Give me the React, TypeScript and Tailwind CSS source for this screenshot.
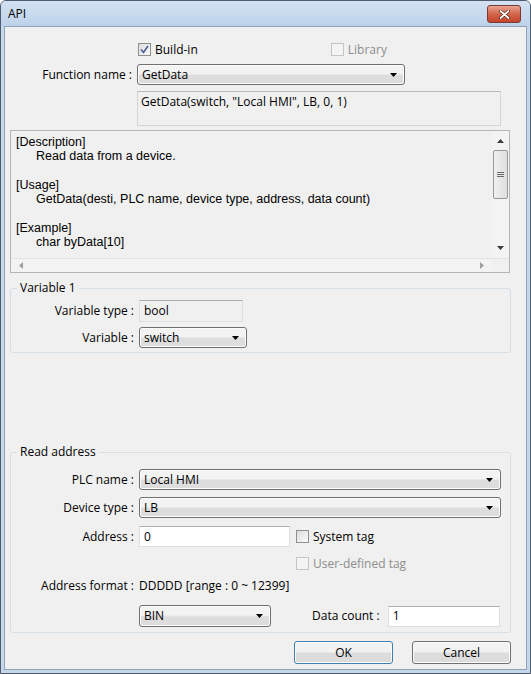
import React from 'react'

const font = "font-['Open_Sans','Noto_Sans',sans-serif]"

function Arrow({ color = '#000' }: { color?: string }) {
  return (
    <svg width="7" height="4" viewBox="0 0 7 4">
      <path d="M0 0h7L3.5 4z" fill={color} />
    </svg>
  )
}

function Combo({ value, className = '' }: { value: string; className?: string }) {
  return (
    <div
      className={`flex h-[21px] items-center justify-between rounded-[3px] border border-[#707070] bg-linear-to-b from-[#f3f3f3] from-45% to-[#dddddd] to-55% pl-[4px] pr-[7px] shadow-[inset_0_0_0_1px_#fcfcfc] ${className}`}
    >
      <span className="leading-none">{value}</span>
      <Arrow />
    </div>
  )
}

function Field({ value, className = '', readOnly = false }: { value: string; className?: string; readOnly?: boolean }) {
  return (
    <div
      className={`flex h-[21px] items-center border border-[#dbdfe6] border-t-[#abadb3] pl-[4px] ${readOnly ? 'bg-[#f0f0f0]' : 'bg-white'} ${className}`}
    >
      <span className="leading-none">{value}</span>
    </div>
  )
}

function Check({ label, checked = false, disabled = false }: { label: string; checked?: boolean; disabled?: boolean }) {
  return (
    <div className={`flex items-center gap-[4px] ${disabled ? 'text-[#8d8d8d]' : ''}`}>
      <div
        className={`flex h-[13px] w-[13px] items-center justify-center border ${
          disabled ? 'border-[#c5c5c5] bg-[#f4f4f4]' : 'border-[#8e8f8f] bg-linear-to-br from-[#dcdcdc] to-[#fbfbfb]'
        }`}
      >
        {checked && (
          <svg width="9" height="9" viewBox="0 0 9 9">
            <path d="M1 4.5l2.5 3L8 1" stroke="#4a5f97" strokeWidth="1.6" fill="none" />
          </svg>
        )}
      </div>
      <span className="leading-none">{label}</span>
    </div>
  )
}

function Row({ label, children, labelW, className = '' }: { label: string; children: React.ReactNode; labelW: string; className?: string }) {
  return (
    <div className={`flex items-center ${className}`}>
      <span className={`${labelW} shrink-0 pr-[5px] text-right leading-none`}>{label}</span>
      {children}
    </div>
  )
}

function Group({ title, className = '', children }: { title: string; className?: string; children: React.ReactNode }) {
  return (
    <fieldset className={`rounded-[3px] border border-[#d5dfe5] ${className}`}>
      <legend className="ml-[6px] px-[3px] leading-[14px]">{title}</legend>
      {children}
    </fieldset>
  )
}

// read-only help text, scrollbars drawn by hand
function Description() {
  return (
    <div className="flex h-[143px] w-[500px] flex-col border border-[#b5b5b5] bg-[#f0f0f0]">
      <div className="flex min-h-0 flex-1">
        <div className="flex-1 overflow-hidden pl-[5px] pt-[4px] font-['Liberation_Sans',Arial,sans-serif] text-[12.5px] leading-[14.3px]">
          <div>[Description]</div>
          <div className="pl-[20px]">Read data from a device.</div>
          <div>&nbsp;</div>
          <div>[Usage]</div>
          <div className="pl-[20px]">GetData(desti, PLC name, device type, address, data count)</div>
          <div>&nbsp;</div>
          <div>[Example]</div>
          <div className="pl-[20px]">char byData[10]</div>
        </div>
        <div className="flex w-[17px] flex-col items-center bg-[#f3f3f3] pt-[8px] pb-[8px]">
          <svg width="7" height="4" viewBox="0 0 7 4">
            <path d="M0 4h7L3.5 0z" fill="#3c3c3c" />
          </svg>
          <div className="mt-[7px] flex h-[49px] w-[15px] items-center justify-center rounded-[2px] border border-[#979797] bg-linear-to-r from-[#f0f0f0] to-[#dedede]">
            <svg width="7" height="6" viewBox="0 0 7 6">
              <path d="M0 0.5h7M0 2.5h7M0 4.5h7" stroke="#6b6b6b" strokeWidth="1" />
            </svg>
          </div>
          <div className="flex-1" />
          <Arrow color="#3c3c3c" />
        </div>
      </div>
      <div className="flex h-[14px] border-t border-[#e2e2e2]">
        <div className="flex flex-1 items-center justify-between bg-[#f3f3f3] px-[8px]">
          <svg width="4" height="7" viewBox="0 0 4 7">
            <path d="M4 0v7L0 3.5z" fill="#a0a0a0" />
          </svg>
          <svg width="4" height="7" viewBox="0 0 4 7">
            <path d="M0 0v7L4 3.5z" fill="#a0a0a0" />
          </svg>
        </div>
        <div className="w-[17px] bg-[#f0f0f0]" />
      </div>
    </div>
  )
}

function Button({ label, primary = false }: { label: string; primary?: boolean }) {
  return (
    <div
      className={`flex h-[23px] w-[99px] items-center justify-center rounded-[3px] border bg-linear-to-b from-[#f2f2f2] from-45% to-[#dcdcdc] to-55% shadow-[inset_0_0_0_1px_#fbfbfb] ${
        primary ? 'border-[#3c7fb1]' : 'border-[#707070]'
      }`}
    >
      {label}
    </div>
  )
}

export default function App() {
  return (
    <div className={`${font} flex h-[674px] w-[531px] flex-col overflow-hidden rounded-t-[6px] border border-[#4e5c6d] bg-[#c6d8ec] text-[12px] text-black`}>
      <div className="flex h-[25px] shrink-0 items-center justify-between bg-linear-to-b from-[#d3e2f2] to-[#bdd2ea] pl-[7px] pr-[9px]">
        <span className="text-[12px]">API</span>
        <div className="mt-[1px] flex h-[18px] w-[34px] items-center justify-center rounded-[3px] border border-[#7b3a30] bg-linear-to-b from-[#e8a593] via-[#d3654d] to-[#c4432c]">
          <svg width="11" height="9" viewBox="0 0 11 9">
            <path d="M1.5 1l8 7M9.5 1l-8 7" stroke="#4a1f18" strokeWidth="3" strokeLinecap="round" />
            <path d="M1.5 1l8 7M9.5 1l-8 7" stroke="#fff" strokeWidth="1.7" strokeLinecap="round" />
          </svg>
        </div>
      </div>

      <div className="mx-[3px] mb-[3px] flex flex-1 flex-col border border-[#8da2b8] bg-[#f0f0f0]">
        <div className="ml-[5px] flex w-[502px] flex-col pt-[16px]">
          <div className="flex items-center">
            <div className="ml-[128px]">
              <Check label="Build-in" checked />
            </div>
            <div className="ml-[133px]">
              <Check label="Library" disabled />
            </div>
          </div>

          <Row label="Function name :" labelW="w-[127px]" className="mt-[8px]">
            <Combo value="GetData" className="w-[268px]" />
          </Row>

          <div className="ml-[127px] mt-[6px] h-[35px] w-[364px] border border-[#d5d5d5] border-t-[#b8b8b8] px-[3px] pt-[4px] leading-none">
            GetData(switch, "Local HMI", LB, 0, 1)
          </div>

          <div className="mt-[4px]">
            <Description />
          </div>

          <Group title="Variable 1" className="mt-[8px] h-[72px] w-[501px]">
            <div className="flex flex-col pt-[5px]">
              <Row label="Variable type :" labelW="w-[128px]">
                <Field value="bool" readOnly className="h-[22px] w-[104px]" />
              </Row>
              <Row label="Variable :" labelW="w-[128px]" className="mt-[5px]">
                <Combo value="switch" className="w-[108px]" />
              </Row>
            </div>
          </Group>

          <Group title="Read address" className="mt-[92px] h-[188px] w-[501px]">
            <div className="flex flex-col pt-[10px]">
              <Row label="PLC name :" labelW="w-[128px]">
                <Combo value="Local HMI" className="w-[362px]" />
              </Row>
              <Row label="Device type :" labelW="w-[128px]" className="mt-[7px]">
                <Combo value="LB" className="w-[362px]" />
              </Row>
              <Row label="Address :" labelW="w-[128px]" className="mt-[8px]">
                <Field value="0" className="w-[151px]" />
                <div className="ml-[6px]">
                  <Check label="System tag" />
                </div>
              </Row>
              <div className="ml-[285px] mt-[10px]">
                <Check label="User-defined tag" disabled />
              </div>
              <Row label="Address format :" labelW="w-[128px]" className="mt-[10px]">
                <span className="leading-none">DDDDD [range : 0 ~ 12399]</span>
              </Row>
              <div className="mt-[13px] flex items-center">
                <Combo value="BIN" className="ml-[128px] h-[22px] w-[132px]" />
                <span className="ml-[41px] leading-none">Data count :</span>
                <Field value="1" className="ml-[8px] h-[20px] w-[112px]" />
              </div>
            </div>
          </Group>

          <div className="mt-[8px] flex justify-end gap-[19px] pr-[1px]">
            <Button label="OK" primary />
            <Button label="Cancel" />
          </div>
        </div>
      </div>
    </div>
  )
}
